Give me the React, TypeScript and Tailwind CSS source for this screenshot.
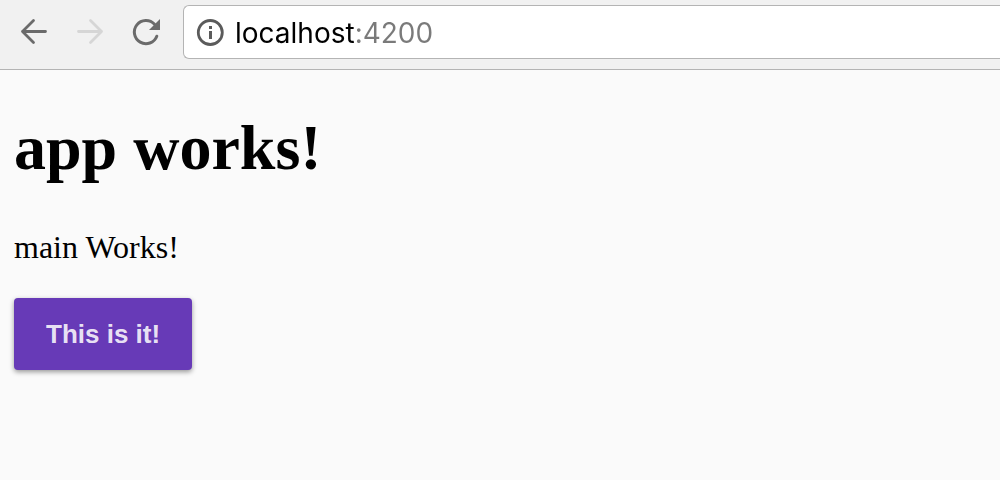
import React from "react";

function Toolbar() {
  return (
    <header className="flex h-[70px] items-start border-b border-[#b4b4b4] bg-[#f1f1f1] pt-[5px] pl-3.5">
      <nav aria-label="Browser navigation" className="flex h-[54px] shrink-0 items-center gap-4">
        <button type="button" aria-label="Back" className="size-10 text-[#6b6b6b]">
          <svg viewBox="0 0 40 40" className="size-10" fill="none" stroke="currentColor" strokeWidth="2.8" strokeLinecap="round" strokeLinejoin="round">
            <path d="M31.5 19.5H8.5M19.5 8.5L8.5 19.5L19.5 30.5" />
          </svg>
        </button>
        <button type="button" aria-label="Forward" disabled className="size-10 text-[#d6d6d6]">
          <svg viewBox="0 0 40 40" className="size-10" fill="none" stroke="currentColor" strokeWidth="2.8" strokeLinecap="round" strokeLinejoin="round">
            <path d="M8.5 19.5H31.5M20.5 8.5L31.5 19.5L20.5 30.5" />
          </svg>
        </button>
        <button type="button" aria-label="Reload" className="size-10 text-[#6b6b6b]">
          <svg viewBox="0 0 40 40" className="size-10" fill="none">
            <path d="M30.8 24.2A11.6 11.6 0 1 1 28.5 12.2" stroke="currentColor" strokeWidth="3" strokeLinecap="round" />
            <path d="M34 7V18H23Z" fill="currentColor" />
          </svg>
        </button>
      </nav>
      <form className="ml-[17px] flex h-[54px] min-w-0 flex-1 items-center rounded-l-md border border-r-0 border-[#b4b4b4] bg-white pl-3">
        <button type="button" aria-label="Site information" className="size-7 shrink-0 text-[#5b5b5b]">
          <svg viewBox="0 0 28 28" className="size-7" fill="none">
            <circle cx="14.3" cy="14.5" r="12" stroke="currentColor" strokeWidth="2.8" />
            <path d="M13 8h3v3h-3zM13 13h3v8h-3z" fill="currentColor" />
          </svg>
        </button>
        <input
          type="text"
          aria-label="Address"
          defaultValue="localhost:4200"
          spellCheck={false}
          className="ml-[11px] h-12 min-w-0 flex-1 bg-linear-to-r from-black from-[119px] to-[#7a7a7a] to-[119px] bg-clip-text pt-0.5 font-['Inter',sans-serif] text-[28px] text-transparent caret-black outline-none"
        />
      </form>
    </header>
  );
}

export default function App() {
  return (
    <div className="min-h-screen bg-[#fafafa] text-black">
      <Toolbar />
      <main className="flex flex-col items-start px-3.5 pt-[41px] font-['Liberation_Serif',serif]">
        <h1 className="text-[64px] leading-[74px] font-bold">app works!</h1>
        <p className="mt-11 text-[32px] leading-9">main Works!</p>
        <button
          type="button"
          className="mt-[33px] h-[72px] rounded-sm bg-[#673ab7] px-8 font-['Liberation_Sans',sans-serif] text-[26px] font-bold text-white/87 shadow-[0_2px_5px_rgba(0,0,0,0.4)]"
        >
          This is it!
        </button>
      </main>
    </div>
  );
}
